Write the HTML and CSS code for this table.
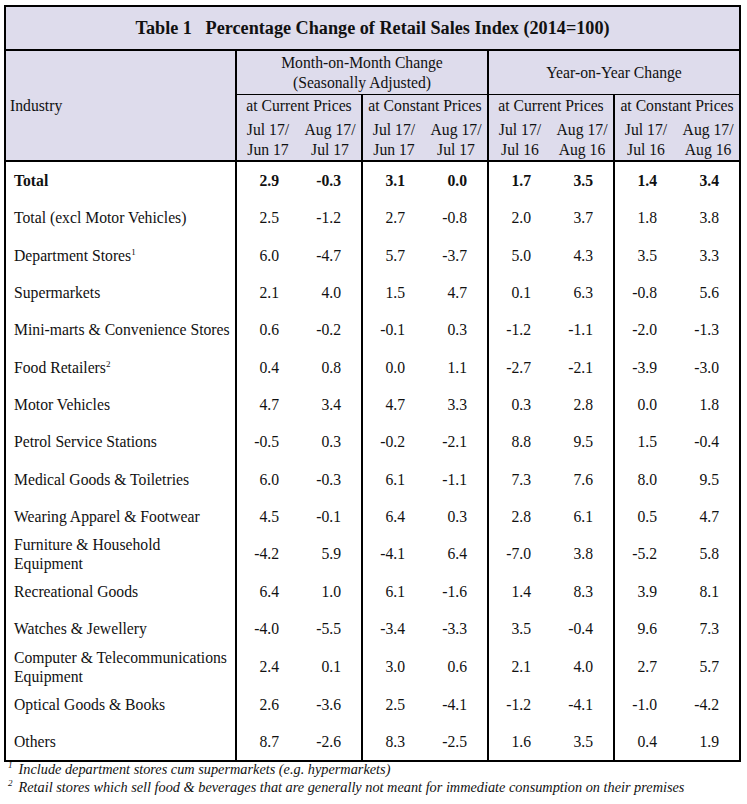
FILE: index.html
```html
<!DOCTYPE html>
<html>
<head>
<meta charset="utf-8">
<link rel="stylesheet" href="styles.css">
</head>
<body>
<div class="page">
<table class="rs">
  <colgroup>
    <col class="c-ind">
    <col class="c-num"><col class="c-num">
    <col class="c-num"><col class="c-num">
    <col class="c-num"><col class="c-num">
    <col class="c-num"><col class="c-num">
  </colgroup>
  <thead>
    <tr class="r-title"><th colspan="9">Table 1&nbsp;&nbsp;&nbsp;Percentage Change of Retail Sales Index (2014=100)</th></tr>
    <tr class="r-grp">
      <th rowspan="3" class="ind-h">Industry</th>
      <th colspan="4">Month-on-Month Change<br>(Seasonally Adjusted)</th>
      <th colspan="4">Year-on-Year Change</th>
    </tr>
    <tr class="r-sub">
      <th colspan="2" class="sub">at Current Prices</th>
      <th colspan="2" class="sub">at Constant Prices</th>
      <th colspan="2" class="sub">at Current Prices</th>
      <th colspan="2" class="sub">at Constant Prices</th>
    </tr>
    <tr class="r-date">
      <th class="gl">Jul 17/<br>Jun 17</th><th class="in">Aug 17/<br>Jul 17</th>
      <th class="gl">Jul 17/<br>Jun 17</th><th class="in">Aug 17/<br>Jul 17</th>
      <th class="gl">Jul 17/<br>Jul 16</th><th class="in">Aug 17/<br>Aug 16</th>
      <th class="gl">Jul 17/<br>Jul 16</th><th class="in">Aug 17/<br>Aug 16</th>
    </tr>
  </thead>
  <tbody>
    <tr class="bold"><td class="lbl">Total</td><td class="gl">2.9</td><td>-0.3</td><td class="gl">3.1</td><td>0.0</td><td class="gl">1.7</td><td>3.5</td><td class="gl">1.4</td><td>3.4</td></tr>
    <tr><td class="lbl">Total (excl Motor Vehicles)</td><td class="gl">2.5</td><td>-1.2</td><td class="gl">2.7</td><td>-0.8</td><td class="gl">2.0</td><td>3.7</td><td class="gl">1.8</td><td>3.8</td></tr>
    <tr><td class="lbl">Department Stores<sup>1</sup></td><td class="gl">6.0</td><td>-4.7</td><td class="gl">5.7</td><td>-3.7</td><td class="gl">5.0</td><td>4.3</td><td class="gl">3.5</td><td>3.3</td></tr>
    <tr><td class="lbl">Supermarkets</td><td class="gl">2.1</td><td>4.0</td><td class="gl">1.5</td><td>4.7</td><td class="gl">0.1</td><td>6.3</td><td class="gl">-0.8</td><td>5.6</td></tr>
    <tr><td class="lbl">Mini-marts &amp; Convenience Stores</td><td class="gl">0.6</td><td>-0.2</td><td class="gl">-0.1</td><td>0.3</td><td class="gl">-1.2</td><td>-1.1</td><td class="gl">-2.0</td><td>-1.3</td></tr>
    <tr><td class="lbl">Food Retailers<sup>2</sup></td><td class="gl">0.4</td><td>0.8</td><td class="gl">0.0</td><td>1.1</td><td class="gl">-2.7</td><td>-2.1</td><td class="gl">-3.9</td><td>-3.0</td></tr>
    <tr><td class="lbl">Motor Vehicles</td><td class="gl">4.7</td><td>3.4</td><td class="gl">4.7</td><td>3.3</td><td class="gl">0.3</td><td>2.8</td><td class="gl">0.0</td><td>1.8</td></tr>
    <tr><td class="lbl">Petrol Service Stations</td><td class="gl">-0.5</td><td>0.3</td><td class="gl">-0.2</td><td>-2.1</td><td class="gl">8.8</td><td>9.5</td><td class="gl">1.5</td><td>-0.4</td></tr>
    <tr><td class="lbl">Medical Goods &amp; Toiletries</td><td class="gl">6.0</td><td>-0.3</td><td class="gl">6.1</td><td>-1.1</td><td class="gl">7.3</td><td>7.6</td><td class="gl">8.0</td><td>9.5</td></tr>
    <tr><td class="lbl">Wearing Apparel &amp; Footwear</td><td class="gl">4.5</td><td>-0.1</td><td class="gl">6.4</td><td>0.3</td><td class="gl">2.8</td><td>6.1</td><td class="gl">0.5</td><td>4.7</td></tr>
    <tr><td class="lbl two">Furniture &amp; Household<br>Equipment</td><td class="gl">-4.2</td><td>5.9</td><td class="gl">-4.1</td><td>6.4</td><td class="gl">-7.0</td><td>3.8</td><td class="gl">-5.2</td><td>5.8</td></tr>
    <tr><td class="lbl">Recreational Goods</td><td class="gl">6.4</td><td>1.0</td><td class="gl">6.1</td><td>-1.6</td><td class="gl">1.4</td><td>8.3</td><td class="gl">3.9</td><td>8.1</td></tr>
    <tr><td class="lbl">Watches &amp; Jewellery</td><td class="gl">-4.0</td><td>-5.5</td><td class="gl">-3.4</td><td>-3.3</td><td class="gl">3.5</td><td>-0.4</td><td class="gl">9.6</td><td>7.3</td></tr>
    <tr><td class="lbl two">Computer &amp; Telecommunications<br>Equipment</td><td class="gl">2.4</td><td>0.1</td><td class="gl">3.0</td><td>0.6</td><td class="gl">2.1</td><td>4.0</td><td class="gl">2.7</td><td>5.7</td></tr>
    <tr><td class="lbl">Optical Goods &amp; Books</td><td class="gl">2.6</td><td>-3.6</td><td class="gl">2.5</td><td>-4.1</td><td class="gl">-1.2</td><td>-4.1</td><td class="gl">-1.0</td><td>-4.2</td></tr>
    <tr><td class="lbl">Others</td><td class="gl">8.7</td><td>-2.6</td><td class="gl">8.3</td><td>-2.5</td><td class="gl">1.6</td><td>3.5</td><td class="gl">0.4</td><td>1.9</td></tr>
  </tbody>
</table>
<div class="notes">
  <p><sup>1</sup>Include department stores cum supermarkets (e.g. hypermarkets)</p>
  <p><sup>2</sup>Retail stores which sell food &amp; beverages that are generally not meant for immediate consumption on their premises</p>
</div>
</div>
</body>
</html>
```

FILE: styles.css
```css
html, body {
  margin: 0;
  padding: 0;
  background: #ffffff;
}
.page {
  padding: 5px 0 0 4px;
  font-family: "Liberation Serif", "Times New Roman", serif;
  color: #111111;
}
.rs {
  border-collapse: collapse;
  table-layout: fixed;
  width: 737px;
  border: 2px solid #000;
  font-size: 15.7px;
}
.c-ind { width: 231px; }
.c-num { width: 63px; }
.rs thead th {
  background: #dedcec;
  font-weight: normal;
  text-align: center;
  padding: 0;
  line-height: 20px;
  border-left: 2px solid #000;
}
.rs thead .r-title th {
  height: 42px;
  font-weight: bold;
  font-size: 18.2px;
  border-bottom: 2px solid #000;
}
.r-grp th { height: 43px; border-bottom: 1.5px solid #000; }
.rs thead th.ind-h {
  text-align: left;
  padding-left: 4px;
  border-left: none;
  border-bottom: 2px solid #000;
}
.r-sub th { height: 22px; vertical-align: middle; }
.rs thead .r-date th {
  height: 40px;
  padding-top: 3px;
  border-bottom: 2px solid #000;
  vertical-align: middle;
}
.rs thead .r-date th.in { border-left: none; }
.rs tbody td {
  height: 37.3px;
  padding: 0 20px 0 0;
  text-align: right;
  vertical-align: middle;
  line-height: 19px;
}
.rs tbody td.gl { border-left: 2px solid #000; }
.rs tbody td.lbl {
  text-align: left;
  padding: 0 0 0 8px;
  white-space: nowrap;
}
.rs tbody tr.bold td { font-weight: bold; }
sup {
  font-size: 9px;
  line-height: 0;
  vertical-align: 6px;
}
.notes {
  font-style: italic;
  font-size: 14.3px;
  padding-left: 4px;
}
.notes p {
  margin: 0;
  line-height: 18px;
}
.notes p:first-child { margin-top: -2px; }
.notes sup {
  font-size: 9px;
  margin-right: 6px;
}
```
